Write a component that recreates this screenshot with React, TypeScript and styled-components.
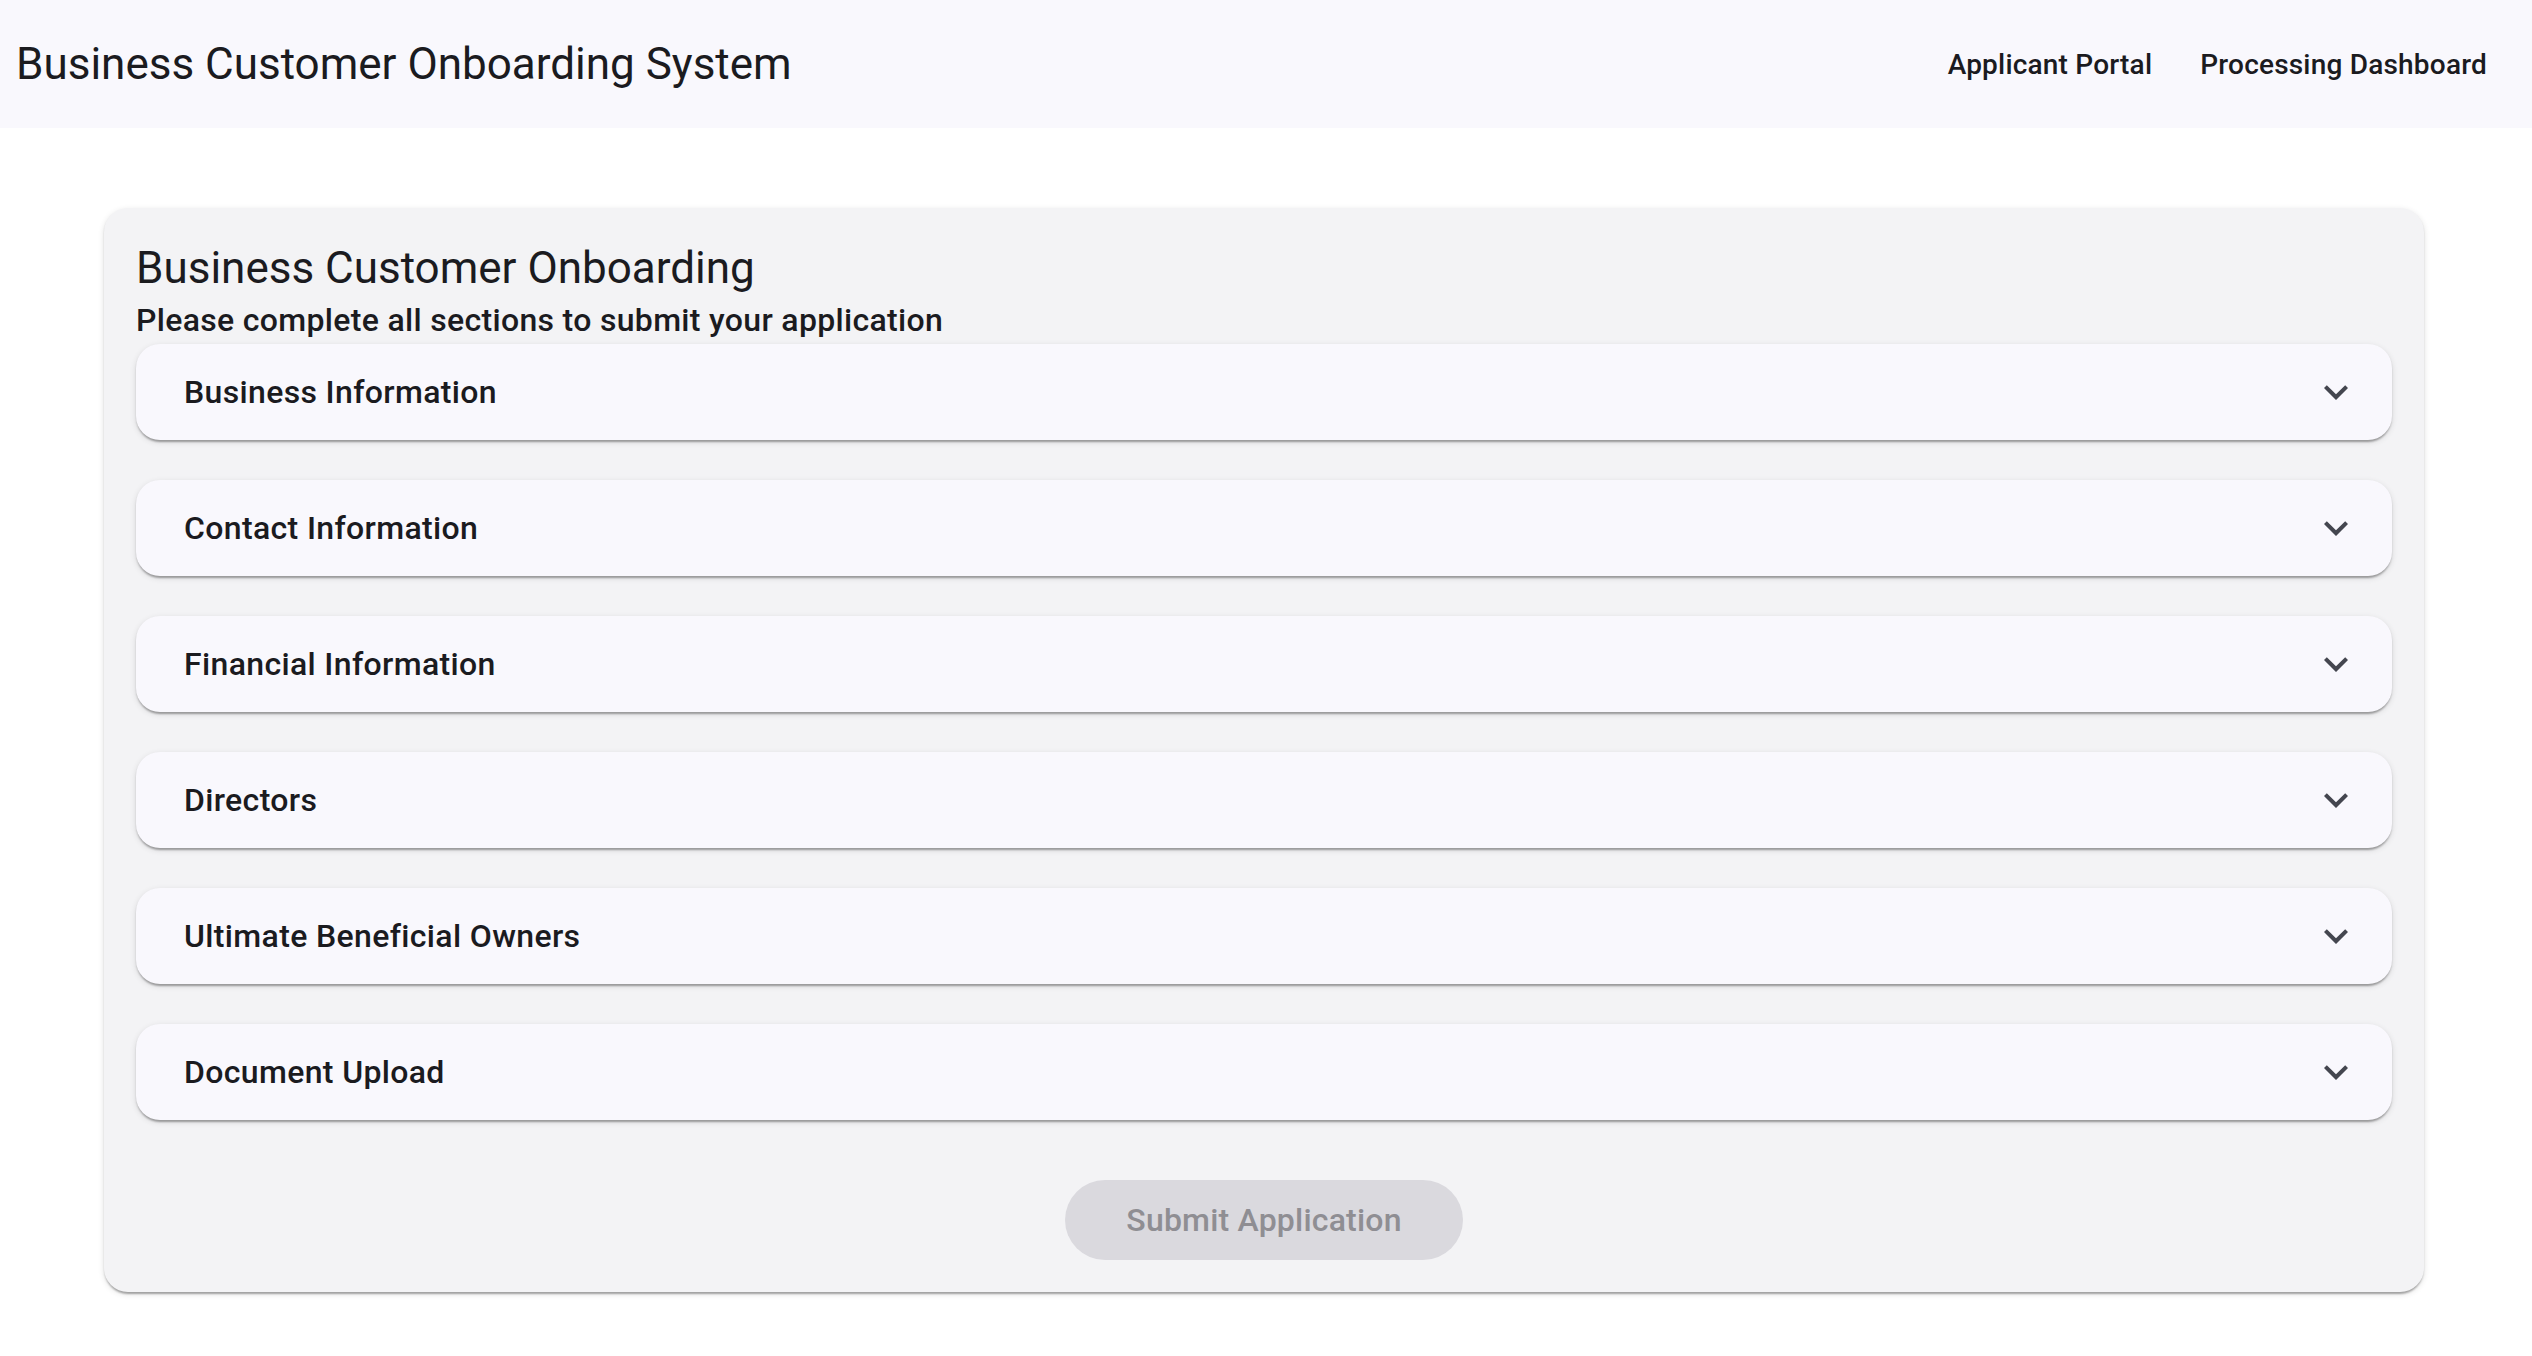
import React from 'react';
import styled, { createGlobalStyle } from 'styled-components';

const GlobalStyle = createGlobalStyle`
    html, body {
        margin: 0;
        padding: 0;
        background: #ffffff;
        font-family: Roboto, "Liberation Sans", sans-serif;
        color: #1b1b1f;
    }
    * {
        box-sizing: border-box;
    }
`;

const AppBar = styled.header`
    height: 128px;
    background: #f9f8fd;
    display: flex;
    align-items: center;
    justify-content: space-between;
    padding: 0 21px 0 16px;
`;

const AppTitle = styled.h1`
    margin: 0;
    font-size: 44px;
    font-weight: 400;
    line-height: 56px;
    color: #1b1b1f;
`;

const Nav = styled.nav`
    display: flex;
    align-items: center;
`;

const NavButton = styled.button`
    border: none;
    background: transparent;
    font-family: inherit;
    font-size: 28px;
    font-weight: 500;
    letter-spacing: 0.2px;
    color: #1b1b1f;
    height: 80px;
    padding: 0 24px;
    border-radius: 40px;
    cursor: pointer;
`;

const Main = styled.main`
    padding: 80px 108px 40px 104px;
`;

const Card = styled.section`
    background: #f3f3f5;
    border-radius: 24px;
    padding: 32px 32px;
    box-shadow: 0 4px 2px -2px rgba(0, 0, 0, 0.2), 0 2px 2px 0 rgba(0, 0, 0, 0.14),
        0 2px 6px 0 rgba(0, 0, 0, 0.12);
    display: flex;
    flex-direction: column;
`;

const CardTitle = styled.h2`
    margin: 0;
    font-size: 44px;
    font-weight: 400;
    line-height: 56px;
    color: #1b1b1f;
`;

const CardSubtitle = styled.p`
    margin: 0;
    font-size: 32px;
    font-weight: 500;
    line-height: 48px;
    letter-spacing: 0.32px;
    color: #1b1b1f;
`;

const SectionList = styled.div`
    display: flex;
    flex-direction: column;
    gap: 40px;
`;

const Section = styled.div`
    height: 96px;
    background: #f9f8fd;
    border-radius: 24px;
    display: flex;
    align-items: center;
    justify-content: space-between;
    padding: 0 32px 0 48px;
    box-shadow: 0 4px 2px -2px rgba(0, 0, 0, 0.2), 0 2px 2px 0 rgba(0, 0, 0, 0.14),
        0 2px 6px 0 rgba(0, 0, 0, 0.12);
    cursor: pointer;
`;

const SectionLabel = styled.span`
    font-size: 32px;
    font-weight: 500;
    letter-spacing: 0.35px;
    color: #1b1b1f;
`;

const Chevron = styled.svg`
    width: 48px;
    height: 48px;
    fill: #44464f;
`;

const Actions = styled.div`
    display: flex;
    justify-content: center;
    margin-top: 60px;
`;

const SubmitButton = styled.button`
    height: 80px;
    padding: 0 61px;
    border: none;
    border-radius: 40px;
    background: #dad9de;
    color: #8f8e93;
    font-family: inherit;
    font-size: 32px;
    font-weight: 500;
    letter-spacing: 0.2px;
`;

const sections = [
    'Business Information',
    'Contact Information',
    'Financial Information',
    'Directors',
    'Ultimate Beneficial Owners',
    'Document Upload',
];

const ExpandMore = () => (
    <Chevron viewBox="0 0 24 24">
        <path d="M16.59 8.59 12 13.17 7.41 8.59 6 10l6 6 6-6z" />
    </Chevron>
);

const App: React.FC = () => {
    return (
        <>
            <GlobalStyle />
            <AppBar>
                <AppTitle>Business Customer Onboarding System</AppTitle>
                <Nav>
                    <NavButton>Applicant Portal</NavButton>
                    <NavButton>Processing Dashboard</NavButton>
                </Nav>
            </AppBar>
            <Main>
                <Card>
                    <CardTitle>Business Customer Onboarding</CardTitle>
                    <CardSubtitle>Please complete all sections to submit your application</CardSubtitle>
                    <SectionList>
                        {sections.map((name) => (
                            <Section key={name}>
                                <SectionLabel>{name}</SectionLabel>
                                <ExpandMore />
                            </Section>
                        ))}
                    </SectionList>
                    <Actions>
                        <SubmitButton disabled>Submit Application</SubmitButton>
                    </Actions>
                </Card>
            </Main>
        </>
    );
};

export default App;
